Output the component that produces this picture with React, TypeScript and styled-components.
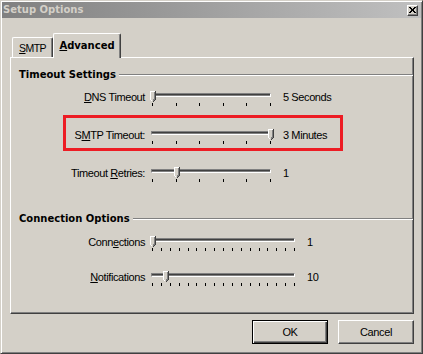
import React from 'react';
import styled, { createGlobalStyle } from 'styled-components';

const Global = createGlobalStyle`
  html, body { margin: 0; padding: 0; background: #d4d0c8; }
  body { font-family: "Liberation Sans", Arial, sans-serif; font-size: 11px; color: #000; }
`;

const Window = styled.div`
  box-sizing: border-box;
  width: 423px;
  height: 354px;
  background: #d4d0c8;
  border: 1px solid;
  border-color: #d4d0c8 #404040 #404040 #d4d0c8;
  box-shadow: inset 1px 1px #fff, inset -1px -1px #808080;
  padding: 1px;
  display: flex;
  flex-direction: column;
`;

const TitleBar = styled.div`
  height: 16px;
  flex: none;
  display: flex;
  align-items: center;
  justify-content: space-between;
  padding: 0 3px 0 1px;
  background: linear-gradient(to right, #808080, #c0c0c0);
`;

const TitleText = styled.span`
  font-family: "DejaVu Sans", Verdana, sans-serif;
  font-weight: bold;
  font-size: 10px;
  line-height: 16px;
  color: #d4d0c8;
`;

const CloseButton = styled.div`
  box-sizing: border-box;
  width: 11px;
  height: 11px;
  background: #d4d0c8;
  border: 1px solid;
  border-color: #fff #404040 #404040 #fff;
  box-shadow: inset -1px -1px #808080;
  display: flex;
  align-items: center;
  justify-content: center;
`;

const Body = styled.div`
  flex: 1;
  display: flex;
  flex-direction: column;
  padding: 15px 7px 8px 8px;
`;

const Tabs = styled.div`
  height: 24px;
  display: flex;
  align-items: flex-end;
  padding-left: 2px;
`;

const Tab = styled.div<{ $active?: boolean; $w: number }>`
  box-sizing: border-box;
  position: relative;
  z-index: ${(p) => (p.$active ? 1 : 0)};
  width: ${(p) => p.$w}px;
  height: ${(p) => (p.$active ? 25 : 20)}px;
  margin-bottom: ${(p) => (p.$active ? -1 : 0)}px;
  padding-top: ${(p) => (p.$active ? 5 : 3)}px;
  background: #d4d0c8;
  border-top: 1px solid #fff;
  border-left: 1px solid #fff;
  border-right: 1px solid #404040;
  box-shadow: inset -1px 0 #808080;
  border-radius: 2px 2px 0 0;
  text-align: center;
  line-height: 14px;
  white-space: nowrap;
  font-family: ${(p) => (p.$active ? '"DejaVu Sans", Verdana, sans-serif' : '"Liberation Sans", Arial, sans-serif')};
  font-weight: ${(p) => (p.$active ? 'bold' : 'normal')};
  font-size: ${(p) => (p.$active ? 10 : 10.5)}px;
  letter-spacing: ${(p) => (p.$active ? 0 : -0.6)}px;
`;

const Panel = styled.div`
  box-sizing: border-box;
  height: 257px;
  flex: none;
  border: 1px solid;
  border-color: #fff #404040 #404040 #fff;
  box-shadow: inset -1px -1px #808080;
  display: flex;
  flex-direction: column;
`;

const GroupHeader = styled.div<{ $mt: number }>`
  margin-top: ${(p) => p.$mt}px;
  height: 14px;
  padding-left: 8px;
  display: flex;
  align-items: center;
  gap: 3px;
  font-family: "DejaVu Sans", Verdana, sans-serif;
  font-weight: bold;
  font-size: 10px;
  line-height: 14px;
  white-space: nowrap;
  &::after {
    content: '';
    flex: 1;
    height: 0;
    border-top: 1px solid #808080;
    border-bottom: 1px solid #fff;
  }
`;

const Row = styled.div<{ $mt: number; $highlight?: boolean }>`
  position: relative;
  margin-top: ${(p) => p.$mt}px;
  display: grid;
  grid-template-columns: 134px auto 1fr;
  align-items: start;
  &::before {
    content: '';
    display: ${(p) => (p.$highlight ? 'block' : 'none')};
    position: absolute;
    left: 52px;
    top: -13px;
    width: 280px;
    height: 36px;
    box-sizing: border-box;
    border: 3px solid #ed1c24;
    pointer-events: none;
  }
`;

const Label = styled.div`
  text-align: right;
  line-height: 14px;
  white-space: nowrap;
  letter-spacing: -0.4px;
`;

const Key = styled.span`
  text-decoration: underline;
  text-underline-offset: 1px;
`;

const SliderBox = styled.div<{ $w: number }>`
  position: relative;
  box-sizing: border-box;
  width: ${(p) => p.$w}px;
  height: 17px;
  margin-left: 4px;
  padding: 3px 3px 0;
  display: flex;
  flex-direction: column;
`;

const Track = styled.div`
  box-sizing: border-box;
  height: 4px;
  margin: 0 0 0 -1px;
  border: 1px solid;
  border-color: #808080 #fff #fff #808080;
  background: linear-gradient(#404040 0 1px, #808080 1px);
`;

const Ticks = styled.div`
  margin-top: 6px;
  display: flex;
  justify-content: space-between;
`;

const Tick = styled.div`
  width: 1px;
  height: 3px;
  background: #000;
`;

const ThumbSvg = styled.svg`
  position: absolute;
  top: 1px;
  display: block;
  shape-rendering: crispEdges;
`;

const Value = styled.div`
  margin-left: 9px;
  line-height: 14px;
  white-space: nowrap;
  letter-spacing: -0.4px;
`;

const Buttons = styled.div`
  margin-top: 6px;
  display: flex;
  justify-content: flex-end;
  gap: 10px;
`;

const Button = styled.button<{ $default?: boolean }>`
  box-sizing: border-box;
  width: 76px;
  height: 24px;
  padding: 0;
  background: #d4d0c8;
  font-family: "Liberation Sans", Arial, sans-serif;
  font-size: 11px;
  letter-spacing: -0.4px;
  color: #000;
  border: 1px solid;
  border-color: ${(p) => (p.$default ? '#000' : '#fff #404040 #404040 #fff')};
  box-shadow: ${(p) =>
    p.$default
      ? 'inset 1px 1px #fff, inset -1px -1px #404040, inset -2px -2px #808080'
      : 'inset -1px -1px #808080'};
`;

function Thumb({ left }: { left: number }) {
  return (
    <ThumbSvg width="6" height="11" viewBox="0 0 6 11" style={{ left }}>
      <path d="M0 0H6V8L3 11L0 8Z" fill="#d4d0c8" />
      <path d="M0.5 8.5V0.5H5" stroke="#fff" fill="none" strokeWidth="1" />
      <path d="M0.5 8.5L2.5 10.5" stroke="#fff" fill="none" strokeWidth="1" />
      <path d="M5.5 0V8.5L3 11" stroke="#404040" fill="none" strokeWidth="1" />
      <path d="M4.5 1V8L3 9.5" stroke="#808080" fill="none" strokeWidth="1" />
    </ThumbSvg>
  );
}

function Slider({ width, ticks, frac }: { width: number; ticks: number; frac: number }) {
  const left = 1 + Math.round(frac * (width - 7));
  return (
    <SliderBox $w={width}>
      <Track />
      <Ticks>
        {Array.from({ length: ticks }).map((_, i) => (
          <Tick key={i} />
        ))}
      </Ticks>
      <Thumb left={left} />
    </SliderBox>
  );
}

export default function App() {
  return (
    <>
      <Global />
      <Window>
        <TitleBar>
          <TitleText>Setup Options</TitleText>
          <CloseButton>
            <svg width="7" height="6" viewBox="0 0 7 6" shapeRendering="crispEdges">
              <path d="M0 0h2v1h-2zM5 0h2v1h-2zM1 1h2v1h-2zM4 1h2v1h-2zM2 2h3v1h-3zM2 3h3v1h-3zM1 4h2v1h-2zM4 4h2v1h-2zM0 5h2v1h-2zM5 5h2v1h-2z" fill="#000" />
            </svg>
          </CloseButton>
        </TitleBar>
        <Body>
          <Tabs>
            <Tab $w={41}>
              <Key>S</Key>MTP
            </Tab>
            <Tab $w={68} $active>
              <Key>A</Key>dvanced
            </Tab>
          </Tabs>
          <Panel>
            <GroupHeader $mt={10}>Timeout Settings</GroupHeader>
            <Row $mt={8}>
              <Label>
                <Key>D</Key>NS Timeout
              </Label>
              <Slider width={125} ticks={6} frac={0} />
              <Value>5 Seconds</Value>
            </Row>
            <Row $mt={21} $highlight>
              <Label>
                S<Key>M</Key>TP Timeout:
              </Label>
              <Slider width={125} ticks={6} frac={1} />
              <Value>3 Minutes</Value>
            </Row>
            <Row $mt={21}>
              <Label>
                Timeout <Key>R</Key>etries:
              </Label>
              <Slider width={125} ticks={6} frac={0.2} />
              <Value>1</Value>
            </Row>
            <GroupHeader $mt={29}>Connection Options</GroupHeader>
            <Row $mt={9}>
              <Label>
                Conn<Key>e</Key>ctions
              </Label>
              <Slider width={149} ticks={17} frac={0} />
              <Value>1</Value>
            </Row>
            <Row $mt={18}>
              <Label>
                <Key>N</Key>otifications
              </Label>
              <Slider width={149} ticks={17} frac={0.09} />
              <Value>10</Value>
            </Row>
          </Panel>
          <Buttons>
            <Button $default>OK</Button>
            <Button>Cancel</Button>
          </Buttons>
        </Body>
      </Window>
    </>
  );
}
